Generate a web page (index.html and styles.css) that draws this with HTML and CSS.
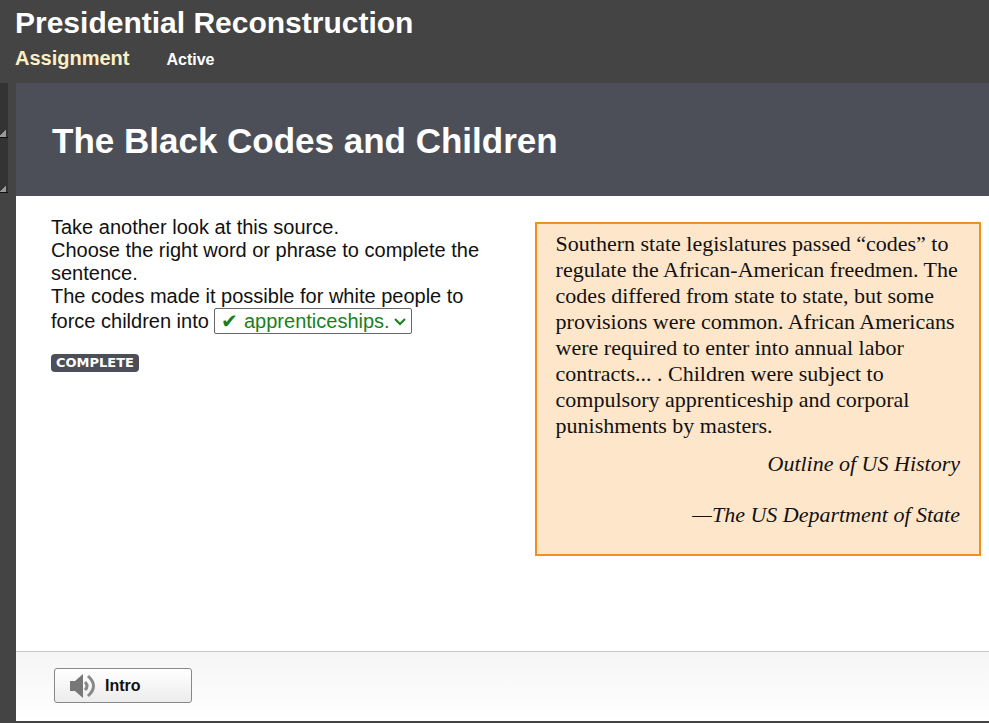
FILE: index.html
```html
<!DOCTYPE html>
<html lang="en">
<head>
  <meta charset="UTF-8" />
  <meta name="viewport" content="width=device-width, initial-scale=1" />
  <title>Presidential Reconstruction</title>
  <link rel="stylesheet" href="styles.css">
</head>
<body>

  <header class="top-bar">
    <h1>Presidential Reconstruction</h1>
    <div class="sub-bar">
      <span class="kind">Assignment</span>
      <span class="status">Active</span>
    </div>
  </header>

  <div class="frame">
    <div class="side-tools">
      <div class="tool"></div>
      <div class="tool"></div>
    </div>

    <main class="activity">
      <div class="banner">
        <h2>The Black Codes and Children</h2>
      </div>

      <div class="content">
        <section class="question">
          <p>Take another look at this source.</p>
          <p>Choose the right word or phrase to complete the sentence.</p>
          <p>
            <label for="answer">The codes made it possible for white people to force children into</label>
            <span class="answer-box">
              <select id="answer" class="answer">
                <option>✔ apprenticeships.</option>
              </select>
              <svg class="chevron" viewBox="0 0 12 8" aria-hidden="true"><path d="M1 1 6 6 11 1" /></svg>
            </span>
          </p>
          <span class="badge">COMPLETE</span>
        </section>

        <blockquote class="source">
          <p>Southern state legislatures passed “codes” to regulate the African-American freedmen. The codes differed from state to state, but some provisions were common. African Americans were required to enter into annual labor contracts... . Children were subject to compulsory apprenticeship and corporal punishments by masters.</p>
          <p class="credit">Outline of US History</p>
          <p class="credit author">—The US Department of State</p>
        </blockquote>
      </div>

      <footer class="bottom-bar">
        <button class="audio-btn" type="button">
          <svg class="speaker" viewBox="0 0 26 26" aria-hidden="true">
            <path class="cone" d="M0 8H5L13 1V25L5 18H0Z" />
            <path class="wave" d="M15 9Q19 13 15 17" />
            <path class="wave" d="M18 3Q29 13 18 23" />
          </svg>
          Intro
        </button>
      </footer>
    </main>
  </div>

</body>
</html>
```

FILE: styles.css
```css
* {
  box-sizing: border-box;
}

body {
  margin: 0;
  min-height: 100vh;
  display: flex;
  flex-direction: column;
  font-family: Arial, "Liberation Sans", sans-serif;
  background: #444;
  color: #111;
}

h1, h2, p {
  margin: 0;
}

.top-bar {
  padding: 4px 15px 7px;
  color: #fff;
}

h1 {
  font-size: 30px;
  line-height: 38px;
}

.sub-bar {
  display: flex;
  align-items: baseline;
  gap: 37px;
  font-weight: bold;
  line-height: 32px;
}

.kind {
  font-size: 20px;
  color: #fdefc0;
}

.status {
  font-size: 16px;
}

.frame {
  flex: 1;
  display: flex;
  padding-bottom: 2px;
}

.side-tools {
  flex: none;
  width: 16px;
  padding-right: 8px;
}

.tool {
  height: 55px;
  border-bottom: 1px solid #111;
  /* small corner fold at the bottom right */
  background: linear-gradient(135deg, transparent 50%, #999 50%) no-repeat right 2px bottom / 6px 8px, #333;
}

.activity {
  flex: 1;
  display: flex;
  flex-direction: column;
  background: #fff;
}

.banner {
  padding: 37px 36px 35px;
  background: #4d4f58;
  color: #fff;
}

h2 {
  font-size: 35px;
  line-height: 41px;
}

.content {
  flex: 1;
  display: flex;
  align-items: flex-start;
  justify-content: space-between;
  gap: 36px;
  padding: 20px 8px 20px 35px;
}

.question {
  flex: 1;
  font-size: 20px;
  line-height: 23px;
}

.answer-box {
  position: relative;
  display: inline-block;
}

.answer {
  appearance: none;
  height: 26px;
  margin: 0;
  padding: 0 21px 0 6px;
  border: 1px solid #666;
  border-radius: 2px;
  background: #fff;
  color: #1a7f1a;
  font: inherit;
}

.chevron {
  position: absolute;
  right: 6px;
  top: 10px;
  width: 12px;
  height: 8px;
  fill: none;
  stroke: #1a7f1a;
  stroke-width: 2;
  pointer-events: none;
}

.badge {
  display: inline-block;
  margin-top: 20px;
  padding: 0 5px;
  border-radius: 4px;
  background: #4d4f58;
  color: #fff;
  font: bold 13px/18px Verdana, "DejaVu Sans", sans-serif;
}

.source {
  flex: 0 0 48%;
  margin: 6px 0 0;
  padding: 7px 19px 26px;
  border: 2px solid #f0911e;
  background: #fee6cb;
  font-family: Georgia, "Liberation Serif", serif;
  font-size: 22px;
  line-height: 26px;
}

.credit {
  margin-top: 12px;
  text-align: right;
  font-style: italic;
}

.author {
  margin-top: 25px;
}

.bottom-bar {
  padding: 16px 38px 18px;
  border-top: 1px solid #c8c8c8;
  background: linear-gradient(#f5f5f5, #fff);
}

.audio-btn {
  display: flex;
  align-items: center;
  gap: 9px;
  min-width: 138px;
  height: 35px;
  padding: 0 15px;
  border: 1px solid #888;
  border-radius: 3px;
  background: linear-gradient(#fff, #ececec);
  color: #111;
  font: bold 16px Arial, "Liberation Sans", sans-serif;
}

.speaker {
  width: 26px;
  height: 26px;
}

.cone {
  fill: #777;
}

.wave {
  fill: none;
  stroke: #888;
  stroke-width: 3;
}
```
